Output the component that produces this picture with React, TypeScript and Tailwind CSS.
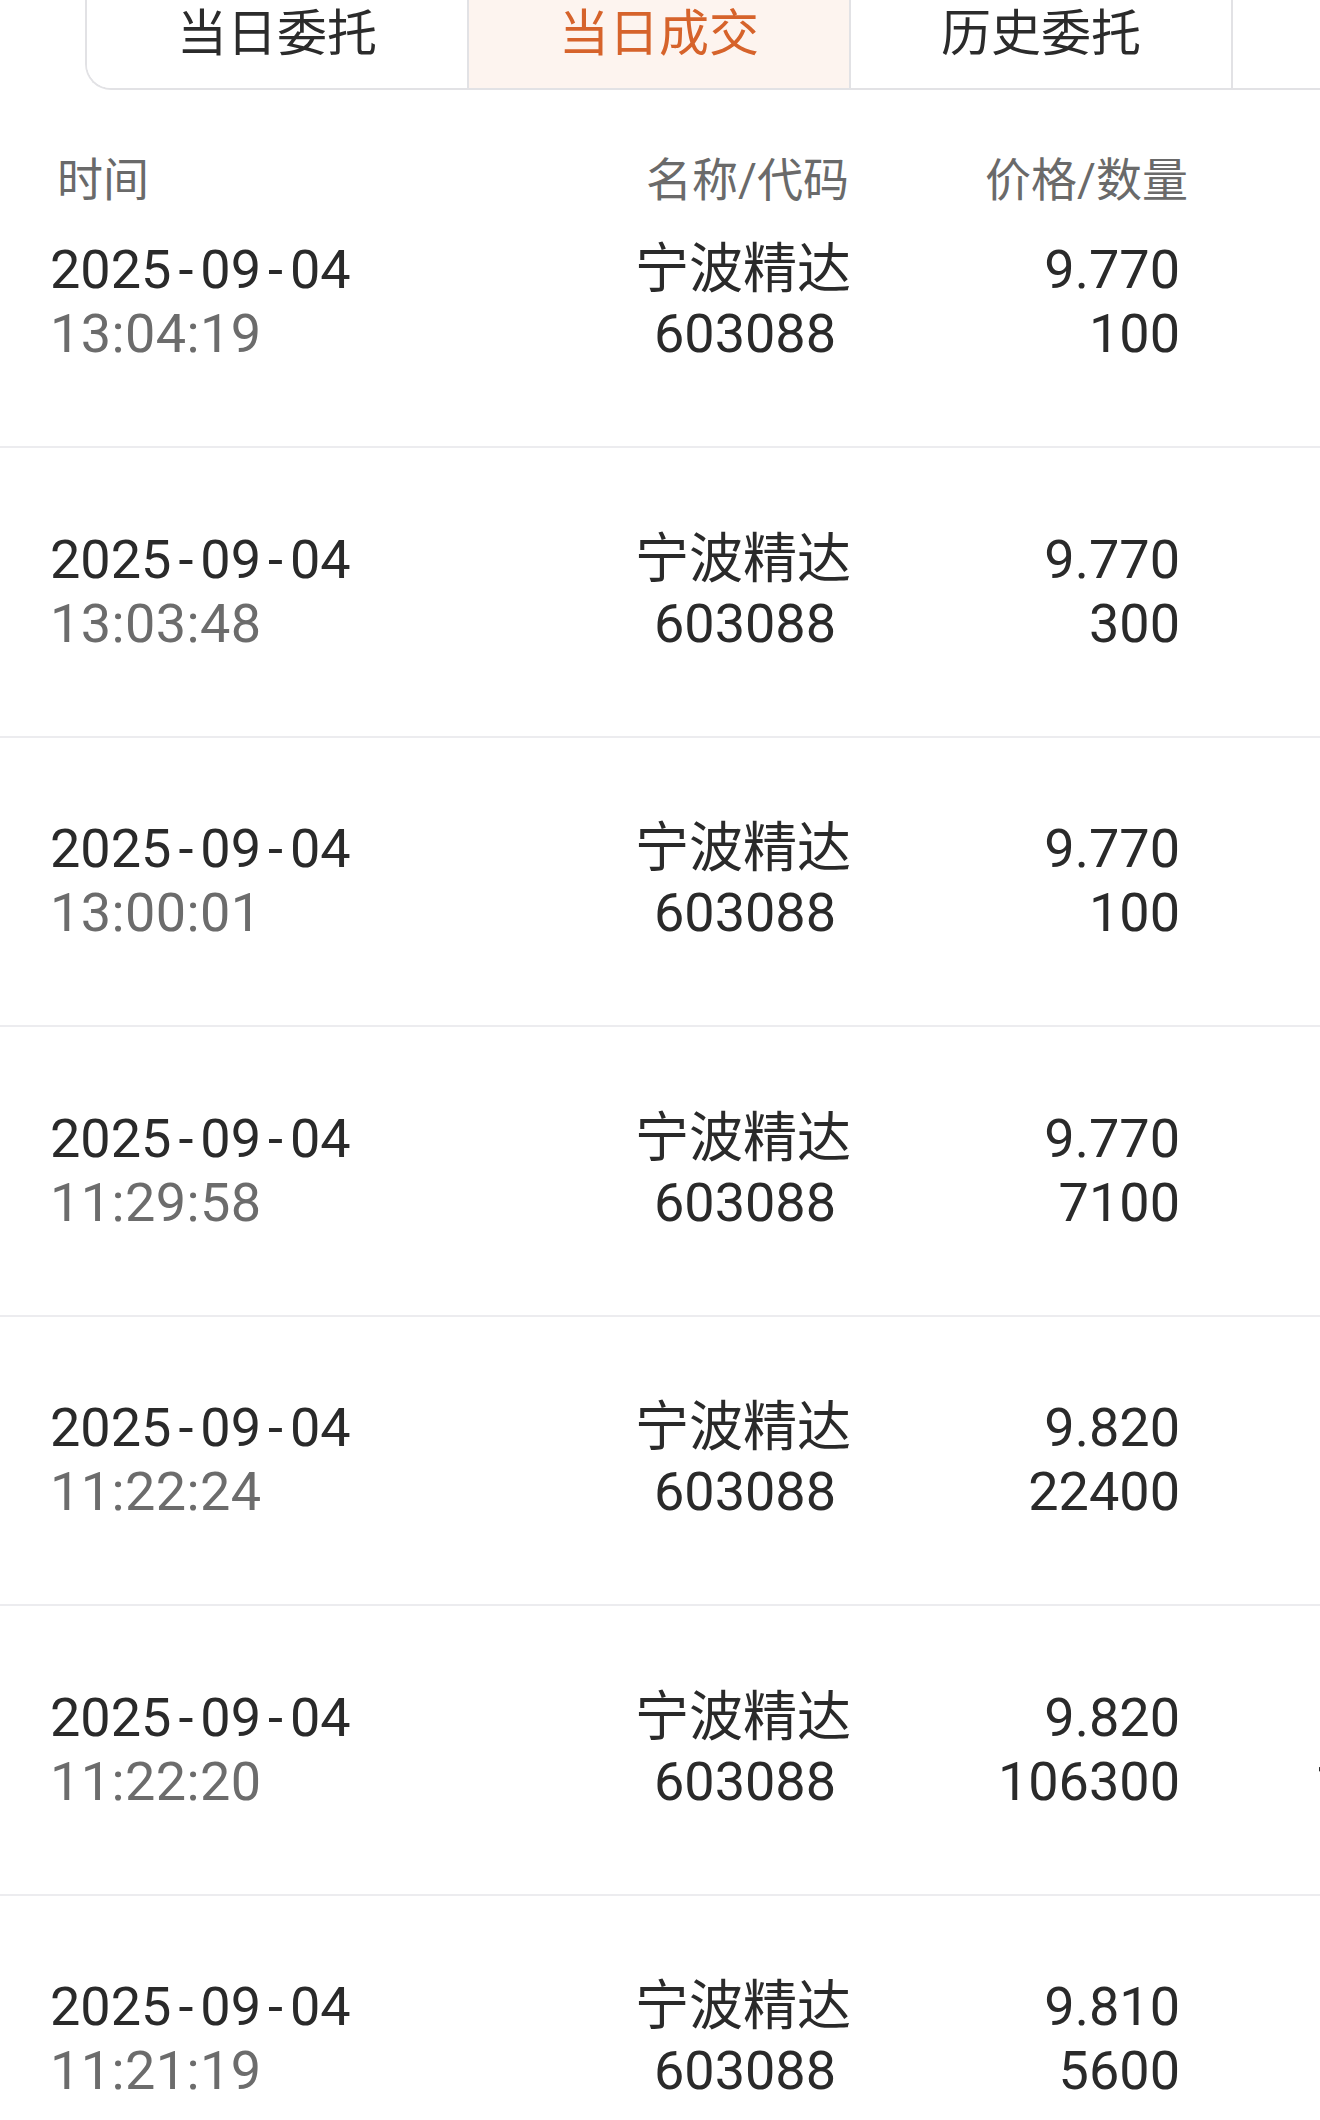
import React from "react";

type Row = { time: string; price: string; qty: string; amount: string };

const rows: Row[] = [
  { time: "13:04:19", price: "9.770", qty: "100", amount: "977.00" },
  { time: "13:03:48", price: "9.770", qty: "300", amount: "2931.00" },
  { time: "13:00:01", price: "9.770", qty: "100", amount: "977.00" },
  { time: "11:29:58", price: "9.770", qty: "7100", amount: "69367.00" },
  { time: "11:22:24", price: "9.820", qty: "22400", amount: "219968.00" },
  { time: "11:22:20", price: "9.820", qty: "106300", amount: "1043866.00" },
  { time: "11:21:19", price: "9.810", qty: "5600", amount: "54936.00" },
];

const tabs = ["当日委托", "当日成交", "历史委托", ""];

function DateText() {
  return (
    <span>
      2025<span className="px-[7px]">-</span>09<span className="px-[7px]">-</span>04
    </span>
  );
}

function TradeRow({ r, first }: { r: Row; first: boolean }) {
  return (
    <div
      className={
        first
          ? "flex items-center pt-[28px] pb-[80px] border-b-2 border-[#ececef]"
          : "flex items-center h-[289.5px] border-b-2 border-[#ececef]"
      }
    >
      <div className="w-[632px] shrink-0 pl-[50px] flex flex-col leading-[64px] whitespace-nowrap">
        <div className="text-[#2a2a2a]">
          <DateText />
        </div>
        <div className="text-[#6c6c6c] tracking-[0.4px]">{r.time}</div>
      </div>
      <div className="w-[222px] shrink-0 flex flex-col items-center leading-[64px] text-[#2a2a2a] whitespace-nowrap">
        <div>宁波精达</div>
        <div className="pl-[4px]">603088</div>
      </div>
      <div className="w-[326px] shrink-0 flex flex-col items-end leading-[64px] text-[#2a2a2a] whitespace-nowrap">
        <div>{r.price}</div>
        <div>{r.qty}</div>
      </div>
      <div className="w-[422px] shrink-0 flex flex-col items-end leading-[64px] text-[#2a2a2a] whitespace-nowrap">
        <div>&nbsp;</div>
        <div>{r.amount}</div>
      </div>
    </div>
  );
}

export default function App() {
  return (
    <div className="w-[1320px] h-[2120px] overflow-hidden bg-white font-['Roboto','Noto_Sans_CJK_SC',sans-serif]">
      <div className="w-[1700px]">
        {/* Tabs */}
        <div className="flex ml-[85px] h-[90px] border-l-2 border-b-2 border-[#e2e2e5] rounded-bl-[26px] overflow-hidden w-[1530px]">
          {tabs.map((t, i) => (
            <div
              key={i}
              className={
                i === 1
                  ? "w-[382px] shrink-0 flex items-center justify-center pb-[20px] border-r-2 border-[#e2e2e5] bg-[#fdf4ef] text-[#d6632b] text-[50px]"
                  : "w-[382px] shrink-0 flex items-center justify-center pb-[20px] border-r-2 border-[#e2e2e5] bg-white text-[#2b2b2b] text-[50px]"
              }
            >
              {t}
            </div>
          ))}
        </div>

        {/* Header */}
        <div className="flex mt-[60px] h-[60px] items-center text-[46px] text-[#6a6a6a] leading-[60px] whitespace-nowrap">
          <div className="w-[590px] shrink-0 pl-[57px]">时间</div>
          <div className="w-[260px] shrink-0 text-right pr-[1px]">名称/代码</div>
          <div className="w-[338px] shrink-0 text-right">价格/数量</div>
        </div>

        {/* Rows */}
        <div className="text-[54px]">
          {rows.map((r, i) => (
            <TradeRow key={i} r={r} first={i === 0} />
          ))}
        </div>
      </div>
    </div>
  );
}
